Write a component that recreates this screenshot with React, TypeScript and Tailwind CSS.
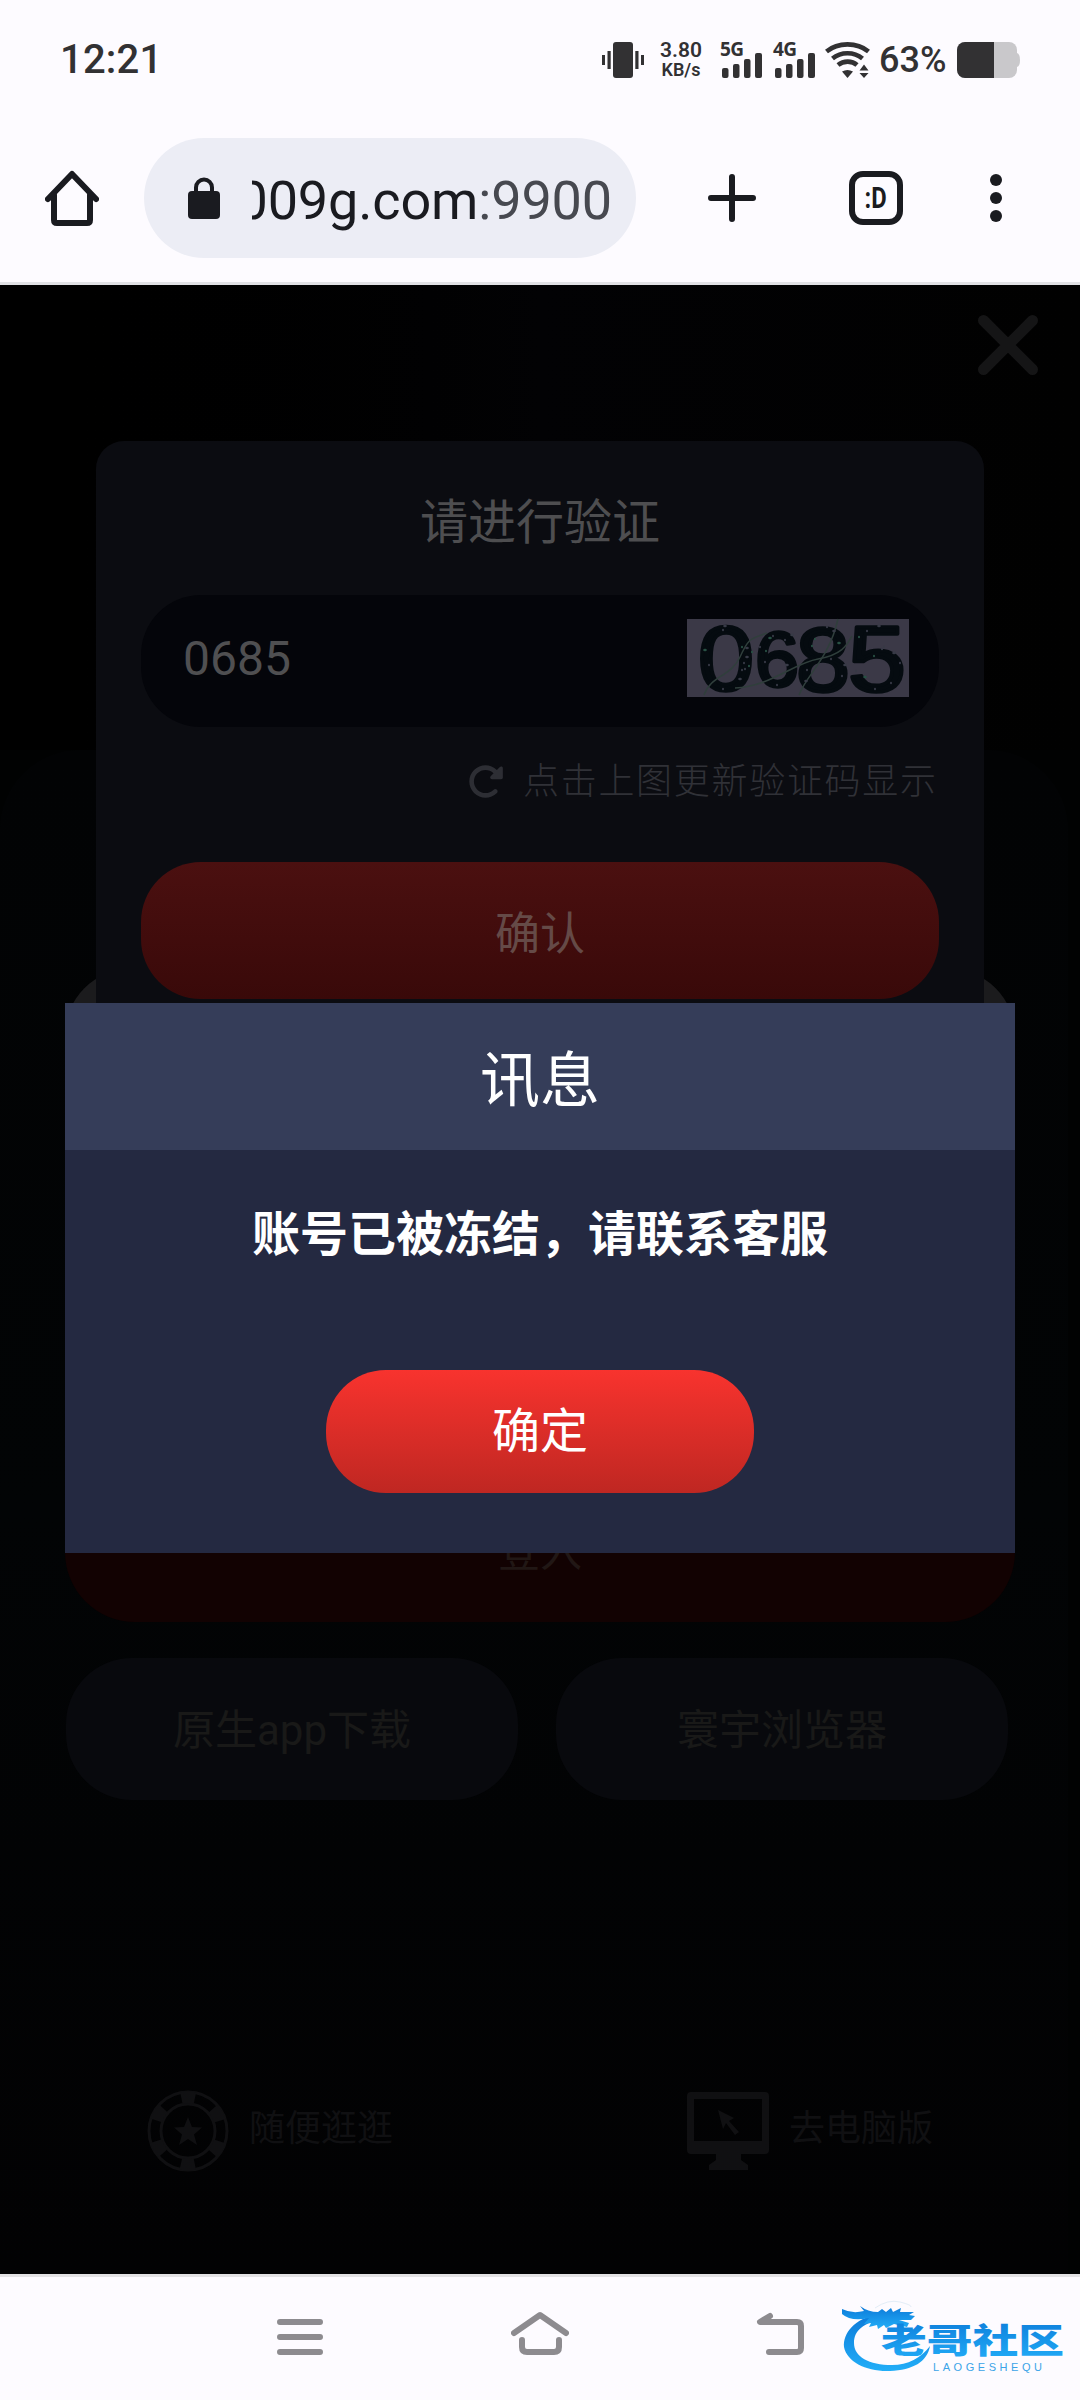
import { FaRotateRight } from "react-icons/fa6"

const captchaSpecks = [
  [18, 31], [22, 46], [36, 11], [38, 7], [55, 28], [57, 44], [60, 38], [55, 51], [62, 47], [53, 60], [36, 70], [73, 28],
  [83, 19], [86, 17], [98, 21], [105, 16], [79, 32], [78, 43], [100, 46], [90, 66], [128, 20], [119, 62], [120, 51],
  [140, 8], [152, 24], [144, 40], [155, 57], [158, 46], [172, 18], [180, 12], [192, 7], [195, 30], [187, 37], [207, 34],
  [213, 44], [169, 52], [178, 58], [188, 70], [204, 64], [60, 29], [65, 33], [58, 50], [147, 12], [197, 28], [125, 27],
]

function StatusBar() {
  return (
    <div className="flex h-[120px] items-center text-[#323133]">
      <span className="ml-[60px] w-[540px] pb-px text-[40px] font-medium leading-[36px] tracking-[0.2px]">12:21</span>
      <svg className="ml-[2px] h-[36px] w-[42px]" viewBox="0 0 42 36" fill="currentColor">
        <rect x="11" y="0" width="20" height="36" rx="3" />
        <rect x="0" y="13" width="3" height="10" />
        <rect x="5.5" y="9" width="3.2" height="18" />
        <rect x="33.3" y="9" width="3.2" height="18" />
        <rect x="39" y="13" width="3" height="10" />
      </svg>
      <div className="ml-[14px] flex w-[46px] flex-col items-center font-semibold">
        <span className="text-[21px] leading-[20px]">3.80</span>
        <span className="text-[18px] leading-[20px]">KB/s</span>
      </div>
      <div className="ml-[16px] flex gap-[13px]">
        <Signal label="5G" />
        <Signal label="4G" />
      </div>
      <svg className="ml-[12px] h-[36px] w-[46px]" viewBox="0 0 46 36" fill="none" stroke="currentColor" strokeWidth="4.6">
        <path d="M1.5 9.5C13 0 32 0 43.5 9.5" />
        <path d="M7.5 16.5C16 9.5 29 9.5 37.5 16.5" />
        <path d="M13 23C18.500 18.500 27 18.500 32 23" />
        <path d="M17 29.500q5.500-3 11 0L22.500 36z" fill="currentColor" stroke="none" />
        <path d="M34.500 28.500L39 22.500L43.500 28.500zM34.500 31L39 36L43.500 31z" fill="currentColor" stroke="none" />
      </svg>
      <span className="ml-[8px] w-[69px] pb-px text-[36px] font-medium leading-[36px]">63%</span>
      <svg className="ml-[9px] h-[36px] w-[63px]" viewBox="0 0 63 36">
        <rect x="0" width="60" height="36" rx="8" fill="#c9c8cb" />
        <path d="M58 11h2q3 1 3 7t-3 7h-2z" fill="#c9c8cb" />
        <path d="M37 0H8a8 8 0 0 0-8 8v20a8 8 0 0 0 8 8h29z" fill="#323133" />
      </svg>
    </div>
  )
}

function Signal({ label }: { label: string }) {
  return (
    <div className="flex h-[36px] w-[40px] flex-col">
      <span className="h-[10px] font-[Noto_Sans] text-[19px] font-bold leading-[14px] tracking-[-0.5px]">{label}</span>
      <svg className="ml-[2px] h-[26px] w-[41px]" viewBox="0 0 41 26" fill="currentColor">
        <rect x="0" y="16" width="6.500" height="10" rx="2" />
        <rect x="11" y="12" width="6.500" height="14" rx="2" />
        <rect x="22" y="7" width="6.500" height="19" rx="2" />
        <rect x="33" y="1" width="7" height="25" rx="2" />
      </svg>
    </div>
  )
}

function BrowserBar() {
  return (
    <div className="flex h-[165px] items-center border-b-[3px] border-[#e1e1e5] pb-[6px] text-[#1a1b20]">
      <svg className="ml-[45px] h-[56px] w-[54px]" viewBox="0 0 54 56" fill="none" stroke="currentColor" strokeWidth="6" strokeLinecap="round" strokeLinejoin="round">
        <path d="M3 29L27 4L51 29" />
        <path d="M9 25V50q0 3 3 3H42q3 0 3-3V25" />
      </svg>
      <div className="ml-[45px] flex h-[120px] w-[492px] items-center rounded-full bg-[#ecedf5]">
        <svg className="ml-[44px] h-[42px] w-[32px]" viewBox="0 0 32 42">
          <rect y="14" width="32" height="28" rx="4" fill="currentColor" />
          <path d="M8 16V10.500a8 8 0 0 1 16 0V16" fill="none" stroke="currentColor" strokeWidth="4" />
        </svg>
        <div className="ml-[32px] flex w-[360px] justify-end overflow-hidden pt-[5px]">
          <span className="text-[54px] leading-[70px] tracking-[-0.15px]">
            009g.com<span className="text-[#474950]">:9900</span>
          </span>
        </div>
      </div>
      <svg className="ml-[72px] h-[48px] w-[48px]" viewBox="0 0 48 48" stroke="currentColor" strokeWidth="6" strokeLinecap="round">
        <path d="M24 3V45M3 24H45" />
      </svg>
      <div className="ml-[93px] flex h-[54px] w-[54px] items-center justify-center rounded-[14px] border-[6px] border-current">
        <span className="scale-x-[0.82] text-[29px] font-bold leading-[30px]">:D</span>
      </div>
      <div className="ml-[87px] flex flex-col gap-[6px]">
        <i className="size-[12px] rounded-full bg-current" />
        <i className="size-[12px] rounded-full bg-current" />
        <i className="size-[12px] rounded-full bg-current" />
      </div>
    </div>
  )
}

function Captcha() {
  return (
    <svg className="mb-[6px] h-[78px] w-[222px] overflow-visible bg-[#3b3947]" viewBox="0 0 222 78">
      <g fill="#050b10" stroke="#050b10" strokeWidth="3.500" strokeLinejoin="round" fontFamily="Liberation Sans">
        <text x="11" y="71" fontSize="91" textLength="56" lengthAdjust="spacingAndGlyphs">0</text>
        <text x="68" y="67" fontSize="78" textLength="44" lengthAdjust="spacingAndGlyphs">6</text>
        <text x="109" y="72" fontSize="91" textLength="54" lengthAdjust="spacingAndGlyphs">8</text>
        <text x="161" y="72" fontSize="93" textLength="58" lengthAdjust="spacingAndGlyphs">5</text>
      </g>
      <g fill="none" stroke="#303f3c" strokeWidth="1.500">
        <path d="M17 76C24 56 44 58 53 38S64 20 80 14" />
        <path d="M48 69C82 68 107 44 131 40S160 26 165 17" />
        <path d="M112 76C120 55 142 40 151 0" />
      </g>
      {captchaSpecks.map(([x, y], i) => (
        <ellipse key={i} cx={x} cy={y} rx={i % 3 === 0 ? 1.8 : 1} ry="1.300" fill={i % 4 === 0 ? "#285044" : "#373a46"} />
      ))}
    </svg>
  )
}

function VerifyPanel() {
  return (
    <div className="absolute left-[96px] top-[156px] h-[640px] w-[888px] rounded-[28px] bg-[#0b0c11] px-[45px]">
      <h2 className="pt-[47px] text-center text-[48px] leading-[70px] text-[#4e4e50]">请进行验证</h2>
      <div className="mt-[37px] flex h-[132px] items-center rounded-[60px] bg-[#04050a] pl-[42px]">
        <span className="w-[504px] pb-[4px] text-[48px] text-[#4f4f51]">0685</span>
        <Captcha />
      </div>
      <div className="mt-[30px] flex h-[48px] items-center text-[#303137]">
        <FaRotateRight className="ml-[326px] size-[37px] text-[#2d2e34]" />
        <span className="ml-[19px] whitespace-nowrap pt-[2px] text-[36px] font-light tracking-[1.700px]">点击上图更新验证码显示</span>
      </div>
      <div className="mt-[57px] flex h-[137px] items-center justify-center rounded-[60px] bg-linear-to-b from-[#4b1010] to-[#390909] pt-[8px] text-[45px] text-[#654a47]">
        确认
      </div>
    </div>
  )
}

function MessageDialog() {
  return (
    <div className="absolute left-[65px] top-[718px] flex h-[550px] w-[950px] flex-col items-center bg-[#242941] text-white">
      <div className="flex h-[147px] w-full items-center justify-center bg-[#353d59] pt-[11px] text-[60px]">讯息</div>
      <p className="mt-[50px] text-[48px] font-bold leading-[70px]">账号已被冻结，请联系客服</p>
      <button className="mt-[100px] h-[123px] w-[428px] rounded-[60px] bg-linear-to-b from-[#f8332e] to-[#bf2722] text-[48px]">确定</button>
    </div>
  )
}

function ChipIcon() {
  return (
    <svg className="size-[82px]" viewBox="0 0 82 82" fill="none" stroke="currentColor">
      <circle cx="41" cy="41" r="39" strokeWidth="3" />
      <circle cx="41" cy="41" r="27" strokeWidth="3" />
      <circle cx="41" cy="41" r="33.500" strokeWidth="12" strokeDasharray="14 21.080" strokeDashoffset="7" transform="rotate(-90 41 41)" />
      <path d="M41 27l4 10 10 .5-8 7 3 10.500-9-6-9 6 3-10.500-8-7 10-.5z" fill="currentColor" stroke="none" />
    </svg>
  )
}

function MonitorIcon() {
  return (
    <svg className="h-[78px] w-[82px]" viewBox="0 0 82 78" fill="currentColor">
      <path fillRule="evenodd" d="M4 0H78q4 0 4 4V58q0 4-4 4H54v6l7 5v5H22v-5l7-5V62H4q-4 0-4-4V4Q0 0 4 0zM7 7V49H75V7z" />
      <path d="M31 18l16 8-5 3 10 11-4 3-9-12-3 6z" />
    </svg>
  )
}

function LoginPage() {
  return (
    <div className="relative h-[1989px] overflow-hidden bg-[#010202]">
      <div className="h-[465px] bg-linear-to-r from-black via-[#020204] to-[#010101]" />
      <div className="mr-[12px] h-[1524px] rounded-t-[80px] bg-linear-to-b from-[#020304] via-[#020405] to-[#020203] px-[65px] pt-[219px]">
        <div className="h-[150px] w-[950px] rounded-[66px] bg-[#1b1b1d]" />
        <div className="mt-[362px] flex h-[141px] w-[950px] items-center justify-center rounded-[70px] bg-[#120202] pt-[2px] text-[42px] text-[#211715]">
          登入
        </div>
        <div className="ml-px mt-[36px] flex w-[942px] gap-[38px] text-[42px] text-[#191918]">
          <div className="flex h-[142px] w-[452px] items-center justify-center rounded-[66px] bg-[#08090d] pt-[3px]">原生app下载</div>
          <div className="flex h-[142px] w-[452px] items-center justify-center rounded-[66px] bg-[#08090d] pt-[3px]">寰宇浏览器</div>
        </div>
        <div className="mt-[290px] flex items-center text-[36px] text-[#101012]">
          <div className="flex w-[540px] items-center gap-[20px] pl-[82px]">
            <ChipIcon />
            <span className="pb-[5px]">随便逛逛</span>
          </div>
          <div className="flex items-center gap-[20px] pl-[82px]">
            <MonitorIcon />
            <span className="pb-[5px]">去电脑版</span>
          </div>
        </div>
      </div>
      <svg className="absolute left-[978px] top-[30px] size-[60px] text-[#151516]" viewBox="0 0 60 60" stroke="currentColor" strokeWidth="11" strokeLinecap="round">
        <path d="M5.500 5.500L54.500 54.500M54.500 5.500L5.500 54.500" />
      </svg>
      <VerifyPanel />
      <MessageDialog />
    </div>
  )
}

function CommunityLogo() {
  return (
    <svg className="absolute left-[840px] top-[20px] h-[84px] w-[230px]" viewBox="0 0 230 84">
      <defs>
        <linearGradient id="logoBlue" x1="0" y1="0" x2="0" y2="1">
          <stop offset="0" stopColor="#0c79d8" />
          <stop offset="1" stopColor="#22aef8" />
        </linearGradient>
      </defs>
      <g fill="url(#logoBlue)">
        <path d="M38 17C14 22 3 36 4 50C7 65 27 75 50 74C73 73 87 65 90 49C81 61 68 68 52 68C29 68 14 60 14 46C14 33 24 26 42 22z" />
        <path d="M2 12q10 5 22 2l-4-5q8 6 18 6l4-3 4 3 5-4 2 4 8-4-1 4 14 0-5 3 6 1-4 4-12 0 10 3-2 4-13-3-8 4-2-3-6 4-1-4-8 2 2-4-7 1 5-6q-18 4-27-4z" />
      </g>
      <path d="M35 11Q48 2 60 5T71 10" fill="none" stroke="#e3edf7" />
      <text x="41" y="56" fontFamily="Noto Sans CJK SC" fontSize="34" fontWeight="900" fill="url(#logoBlue)" textLength="183" lengthAdjust="spacingAndGlyphs">老哥社区</text>
      <text x="93" y="74" fontFamily="Liberation Sans" fontSize="11" fill="#3ba4e8" textLength="109">LAOGESHEQU</text>
    </svg>
  )
}

function NavBar() {
  return (
    <div className="relative h-[126px] border-t-[3px] border-[#e3e2e4] text-[#8d8b8f]">
      <div className="flex pt-[34px]">
        <svg className="ml-[277px] h-[46px] w-[46px]" viewBox="0 0 46 46" stroke="currentColor" strokeWidth="6" strokeLinecap="round">
          <path d="M3 11H43M3 26H43M3 41H43" />
        </svg>
        <svg className="ml-[188px] h-[46px] w-[58px]" viewBox="0 0 58 46" fill="none" stroke="currentColor" strokeWidth="6" strokeLinecap="round" strokeLinejoin="round">
          <path d="M3 22L29 4L55 22" />
          <path d="M11 29V36q0 5 5 5H43q5 0 5-5V29" />
        </svg>
        <svg className="ml-[187px] h-[46px] w-[50px]" viewBox="0 0 50 46" fill="none" stroke="currentColor" strokeWidth="6" strokeLinecap="round" strokeLinejoin="round">
          <path d="M14 5L4 11H41q4 0 4 4V37q0 4-4 4H13" />
        </svg>
      </div>
      <CommunityLogo />
    </div>
  )
}

export default function App() {
  return (
    <div className="h-[2400px] w-[1080px] overflow-hidden bg-[#fdfbff] font-[Roboto,'Noto_Sans_CJK_SC',sans-serif]">
      <StatusBar />
      <BrowserBar />
      <LoginPage />
      <NavBar />
    </div>
  )
}
